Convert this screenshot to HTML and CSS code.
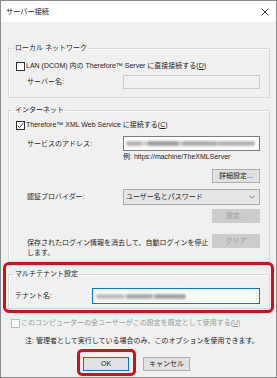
FILE: index.html
```html
<!DOCTYPE html>
<html lang="ja">
<head>
<meta charset="utf-8">
<link rel="stylesheet" href="styles.css">
</head>
<body>
<div class="win">
  <div class="titlebar">
    <span class="title">サーバー接続</span>
    <svg class="close" width="8" height="8" viewBox="0 0 8 8"><path d="M0.5 0.5L7.5 7.5M7.5 0.5L0.5 7.5" stroke="#222" stroke-width="0.9" fill="none"/></svg>
  </div>
  <div class="content">
    <fieldset class="grp g1">
      <legend>ローカル ネットワーク</legend>
      <div class="chk"><span class="box"></span><span>LAN (DCOM) 内の Therefore™ Server に直接接続する(<u>D</u>)</span></div>
      <div class="row r-server"><span class="lbl">サーバー名:</span><span class="field dis"></span></div>
    </fieldset>

    <fieldset class="grp g2">
      <legend>インターネット</legend>
      <div class="chk"><span class="box"><svg width="9" height="9" viewBox="0 0 9 9"><path d="M1.6 4.6L3.6 6.6L7.6 1.8" stroke="#222" stroke-width="0.9" fill="none"/></svg></span><span>Therefore™ XML Web Service に接続する(<u>C</u>)</span></div>
      <div class="row r-addr"><span class="lbl">サービスのアドレス:</span><span class="field"><span class="blur b-addr"></span></span></div>
      <div class="hint">例: https://machine/TheXMLServer</div>
      <div class="btnrow r-adv"><span class="btn">詳細設定...</span></div>
      <div class="row r-prov"><span class="lbl">認証プロバイダー:</span><span class="select"><span>ユーザー名とパスワード</span><svg width="6" height="4" viewBox="0 0 6 4"><path d="M0.5 0.8L3 3.2L5.5 0.8" stroke="#666" stroke-width="0.8" fill="none"/></svg></span></div>
      <div class="btnrow r-set"><span class="btn dis">設定...</span></div>
      <div class="clearrow"><span class="clrtext">保存されたログイン情報を消去して、自動ログインを停止<br>します。</span><span class="btn dis">クリア</span></div>
    </fieldset>

    <fieldset class="grp g3">
      <legend>マルチテナント設定</legend>
      <div class="row r-tenant"><span class="lbl">テナント名:</span><span class="field focus"><span class="blur b-ten"></span></span></div>
    </fieldset>

    <div class="chk allusers dtext"><span class="box dbox"></span><span>このコンピューターの全ユーザーがこの設定を既定として使用する(<u>U</u>)</span></div>
    <div class="note">注: 管理者として実行している場合のみ、このオプションを使用できます。</div>
    <div class="actions">
      <span class="btn def">OK</span>
      <span class="btn">キャンセル</span>
    </div>
  </div>
  <div class="mark mark-tenant"></div>
  <div class="mark mark-ok"></div>
</div>
</body>
</html>
```

FILE: styles.css
```css
* { box-sizing: border-box; margin: 0; padding: 0; }
html, body { width: 277px; height: 378px; overflow: hidden; }
body {
  font-family: "Liberation Sans", "Noto Sans CJK JP", sans-serif;
  font-size: 7px;
  line-height: 10px;
  color: #1e1e1e;
  background: #fff;
}
u { text-decoration: underline; text-underline-offset: 1px; }

.win {
  position: relative;
  width: 277px;
  height: 378px;
  border: 1px solid #8a8a8a;
  background: #f0f0f0;
  display: flex;
  flex-direction: column;
}
.titlebar {
  height: 21px;
  flex: none;
  background: #fff;
  display: flex;
  align-items: center;
  justify-content: space-between;
  padding: 0 7px 0 5px;
}
.title { font-size: 7.2px; color: #222; }

.content {
  display: flex;
  flex-direction: column;
  padding: 0 6px 0 7px;
}

fieldset.grp {
  border: 1px solid #d9d9d9;
  box-shadow: inset 1px 1px 0 #fbfbfb;
  padding: 0 9px 0 6px;
  min-width: 0;
}
fieldset.grp legend {
  margin-left: -1px;
  padding: 0 1px;
  line-height: 10px;
}
fieldset.g1 { margin-top: 21px; padding-top: 8px; padding-bottom: 8px; }
fieldset.g2 { margin-top: 7px; padding-top: 5px; padding-bottom: 3px; }
fieldset.g3 { margin-top: 7px; padding-top: 9px; padding-bottom: 4px; }

.chk { display: flex; align-items: center; height: 10px; gap: 1px; white-space: nowrap; padding-left: 1px; }
.box {
  width: 9px; height: 9px;
  border: 1px solid #333;
  background: #fff;
  flex: none;
  position: relative;
}
.box svg { position: absolute; left: -1px; top: -1px; }
.dbox { border-color: #bdbdbd; }
.dtext { color: #9a9a9a; }

.row {
  display: grid;
  grid-template-columns: 96px 1fr;
  align-items: center;
  padding-left: 12px;
}
.r-server { margin-top: 4px; }
.r-addr { margin-top: 6px; }
.r-prov { margin-top: 6px; }
.r-tenant { grid-template-columns: 77px 1fr; padding-left: 0; }

.field {
  height: 15px;
  border: 1px solid #7a7a7a;
  background: #fff;
  position: relative;
  overflow: hidden;
}
.field.dis { border-color: #cccccc; background: #f0f0f0; height: 14px; }
.field.focus { border-color: #0078d7; height: 16px; }

.blur {
  position: absolute;
  top: 4px;
  height: 5px;
  filter: blur(1.2px);
  border-radius: 2px;
}
.b-addr {
  left: 2px; right: 4px;
  background: linear-gradient(90deg, #b5b5b5 0 12%, #d0d0d0 12% 17%, #9e9e9e 17% 40%, #c9c9c9 40% 44%, #acacac 44% 70%, #c4c4c4 70% 73%, #b3b3b3 73% 100%);
}
.b-ten {
  top: 4.5px;
  left: 3px; width: 90px;
  background: linear-gradient(90deg, #bdbdbd 0 30%, #d4d4d4 30% 35%, #a9a9a9 35% 62%, #cfcfcf 62% 66%, #a3a3a3 66% 100%);
}

.hint { margin-top: 1px; padding-left: 108px; height: 10px; white-space: nowrap; }

.btnrow { display: flex; justify-content: flex-end; }
.r-adv { margin-top: 7px; }
.r-set { margin-top: 4px; }

.btn {
  display: inline-flex;
  align-items: center;
  justify-content: center;
  width: 48px;
  height: 14px;
  border: 1px solid #adadad;
  background: #e1e1e1;
  white-space: nowrap;
}
.btn.dis { border-color: #cccccc; background: #cccccc; color: #9c9c9c; }
.btn.def { border-color: #0078d7; }

.select {
  height: 16px;
  border: 1px solid #acacac;
  background: #e5e5e5;
  display: flex;
  align-items: center;
  justify-content: space-between;
  padding: 0 4px 0 2px;
}

.clearrow {
  margin-top: 11px;
  display: flex;
  justify-content: space-between;
  align-items: flex-start;
  padding-left: 12px;
}
.clrtext { margin-top: 4px; white-space: nowrap; }

.allusers { margin-top: 9px; margin-left: 2px; }
.note { margin-top: 8px; padding-left: 17px; white-space: nowrap; }
.actions {
  margin-top: 11px;
  display: flex;
  gap: 14px;
  padding-left: 75px;
}
.actions .btn { width: 46px; }
.actions .btn + .btn { width: 47px; }

.mark {
  position: absolute;
  border: 3px solid #d2101c;
  border-radius: 6px;
}
.mark-tenant { left: 2px; top: 261px; width: 271px; height: 51px; }
.mark-ok { left: 76px; top: 348px; width: 59px; height: 27px; border-radius: 5px; }
```
